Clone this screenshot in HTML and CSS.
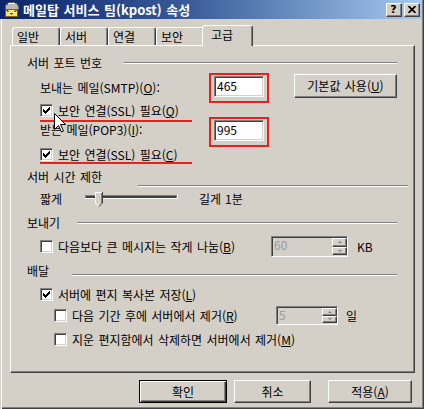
FILE: index.html
```html
<!DOCTYPE html>
<html lang="ko">
<head>
<meta charset="utf-8">
<title>메일탑 서비스 팀(kpost) 속성</title>
<link rel="stylesheet" href="styles.css">
</head>
<body>
<div class="window">
  <div class="titlebar">
    <svg class="appicon" width="18" height="17" viewBox="0 0 18 17" shape-rendering="crispEdges">
      <path d="M3 7 L4 4 L7 2 L11 1 L15 3 L17 6 L16 9 L4 9 Z" fill="#b8b8b8" stroke="#606060" stroke-width="1"/>
      <path d="M6 3 L10 2 L13 3" fill="none" stroke="#ffffff" stroke-width="1"/>
      <rect x="3.5" y="8.5" width="12" height="7" fill="#ffe060" stroke="#806010"/>
      <path d="M4 9 L9.5 13 L15 9" fill="none" stroke="#806010" stroke-width="1"/>
      <path d="M5 11 H8 M11 11 H14" stroke="#ffffff" stroke-width="1"/>
    </svg>
    <span class="title">메일탑 서비스 팀(kpost) 속성</span>
    <span class="tb-btn help">?</span>
    <span class="tb-btn close">
      <svg width="8" height="7" viewBox="0 0 8 7"><path d="M0.5 0 L7.5 7 M7.5 0 L0.5 7" stroke="#000" stroke-width="1.7"/></svg>
    </span>
  </div>

  <div class="content">
    <div class="tabs">
      <div class="tab">일반</div>
      <div class="tab">서버</div>
      <div class="tab">연결</div>
      <div class="tab">보안</div>
      <div class="tab active">고급</div>
    </div>

    <div class="panel">
      <div class="grp grp-ports"><span class="grp-label">서버 포트 번호</span><span class="rule rule-ports"></span></div>

      <div class="port-row smtp-row">
        <span class="port-label">보내는 메일(SMTP)(<u>O</u>):</span>
        <span class="annot-box"><span class="edit">465</span></span>
        <span class="btn defaults-btn">기본값 사용(<u>U</u>)</span>
      </div>

      <div class="chk-row ssl1-row">
        <span class="chk-label annot-ul ul-first">
          <span class="chk"><svg class="tick" width="7" height="7" viewBox="0 0 7 7" shape-rendering="crispEdges"><path d="M0 2h1v3h-1z M1 3h1v3h-1z M2 4h1v3h-1z M3 3h1v3h-1z M4 2h1v3h-1z M5 1h1v3h-1z M6 0h1v3h-1z" fill="#000"/></svg></span>
          <span class="chk-text">보안 연결(SSL) 필요(<u>Q</u>)</span>
        </span>
      </div>

      <div class="port-row pop-row">
        <span class="port-label pop-label">받는 메일(POP3)(<u>I</u>):</span>
        <span class="annot-box"><span class="edit">995</span></span>
      </div>

      <div class="chk-row ssl2-row">
        <span class="chk-label annot-ul ul-second">
          <span class="chk"><svg class="tick" width="7" height="7" viewBox="0 0 7 7" shape-rendering="crispEdges"><path d="M0 2h1v3h-1z M1 3h1v3h-1z M2 4h1v3h-1z M3 3h1v3h-1z M4 2h1v3h-1z M5 1h1v3h-1z M6 0h1v3h-1z" fill="#000"/></svg></span>
          <span class="chk-text">보안 연결(SSL) 필요(<u>C</u>)</span>
        </span>
      </div>

      <div class="grp grp-time"><span class="grp-label">서버 시간 제한</span><span class="rule rule-time"></span></div>

      <div class="slider-row">
        <span class="short-lbl">짧게</span>
        <svg class="slider" width="93" height="15" viewBox="0 0 93 15" shape-rendering="crispEdges">
          <rect x="0" y="3" width="93" height="4" fill="#ffffff"/>
          <rect x="0" y="3" width="92" height="3" fill="#808080"/>
          <rect x="1" y="4" width="90" height="2" fill="#404040"/>
          <polygon points="10,0 17,0 17,11 14,14 13,14 10,11" fill="#D4D0C8"/>
          <rect x="10" y="0" width="7" height="1" fill="#ffffff"/>
          <rect x="10" y="0" width="1" height="11" fill="#ffffff"/>
          <rect x="17" y="0" width="1" height="11" fill="#404040"/>
          <rect x="16" y="1" width="1" height="10" fill="#808080"/>
          <path d="M10.5 11 L13.5 14" stroke="#ffffff" stroke-width="1" shape-rendering="auto"/>
          <path d="M17.5 11 L14 14.5" stroke="#404040" stroke-width="1" shape-rendering="auto"/>
        </svg>
        <span class="long-lbl">길게</span>
        <span class="time-val">1분</span>
      </div>

      <div class="grp grp-send"><span class="grp-label">보내기</span><span class="rule rule-send"></span></div>

      <div class="spin-row split-row">
        <span class="chk-label split-label">
          <span class="chk"></span>
          <span class="chk-text">다음보다 큰 메시지는 작게 나눔(<u>B</u>)</span>
        </span>
        <span class="spin spin-size">
          <span class="spin-val">60</span>
          <span class="spin-btns"><span class="sb sb-up"></span><span class="sb sb-down"></span></span>
        </span>
        <span class="unit unit-kb">KB</span>
      </div>

      <div class="grp grp-deliver"><span class="grp-label">배달</span><span class="rule rule-deliver"></span></div>

      <div class="chk-row keep-row">
        <span class="chk-label">
          <span class="chk"><svg class="tick" width="7" height="7" viewBox="0 0 7 7" shape-rendering="crispEdges"><path d="M0 2h1v3h-1z M1 3h1v3h-1z M2 4h1v3h-1z M3 3h1v3h-1z M4 2h1v3h-1z M5 1h1v3h-1z M6 0h1v3h-1z" fill="#000"/></svg></span>
          <span class="chk-text">서버에 편지 복사본 저장(<u>L</u>)</span>
        </span>
      </div>

      <div class="spin-row remove-row">
        <span class="chk-label remove-label">
          <span class="chk"></span>
          <span class="chk-text">다음 기간 후에 서버에서 제거(<u>R</u>)</span>
        </span>
        <span class="spin spin-days">
          <span class="spin-val">5</span>
          <span class="spin-btns"><span class="sb sb-up"></span><span class="sb sb-down"></span></span>
        </span>
        <span class="unit unit-day">일</span>
      </div>

      <div class="chk-row deleted-row">
        <span class="chk-label">
          <span class="chk"></span>
          <span class="chk-text">지운 편지함에서 삭제하면 서버에서 제거(<u>M</u>)</span>
        </span>
      </div>
    </div>

    <div class="buttons">
      <span class="btn default ok-btn">확인</span>
      <span class="btn cancel-btn">취소</span>
      <span class="btn apply-btn">적용(<u>A</u>)</span>
    </div>
  </div>

  <svg class="cursor" width="13" height="20" viewBox="0 0 13 20">
    <path d="M0.5 0.5 L0.5 16.5 L4.5 12.5 L7.5 19 L9.5 18 L6.5 11.5 L11.5 11.5 Z" fill="#ffffff" stroke="#000000" stroke-width="1"/>
  </svg>
</div>
</body>
</html>
```

FILE: styles.css
```css
* { box-sizing: border-box; }
html, body { margin: 0; padding: 0; }
body {
  width: 424px;
  height: 409px;
  overflow: hidden;
  background: #D4D0C8;
  font-family: "Noto Sans CJK KR", "Noto Sans", sans-serif;
  font-size: 12px;
  color: #000;
  word-spacing: 1px;
}
u { text-decoration: underline; text-underline-offset: 1px; }

.window {
  position: relative;
  width: 424px;
  height: 409px;
  background: #D4D0C8;
  box-shadow: inset 1px 0 #D4D0C8, inset 2px 0 #ffffff, inset -1px -1px #404040, inset -2px -2px #808080;
}

/* title bar */
.titlebar {
  height: 19px;
  margin-right: 2px;
  background: linear-gradient(90deg, #0A246A 0%, #3a5c9a 45%, #A6CAF0 100%);
  display: flex;
  align-items: center;
  padding-left: 2px;
}
.appicon { flex: none; }
.title {
  flex: 1;
  margin-left: 3px;
  color: #fff;
  font-weight: bold;
  font-size: 13px;
  line-height: 19px;
  white-space: nowrap;
}
.tb-btn {
  flex: none;
  width: 16px;
  height: 14px;
  margin-left: 2px;
  background: #D4D0C8;
  border: 1px solid;
  border-color: #fff #404040 #404040 #fff;
  box-shadow: inset -1px -1px #808080;
  display: flex;
  align-items: center;
  justify-content: center;
}
.tb-btn.help {
  font-family: "DejaVu Sans", sans-serif;
  font-weight: bold;
  font-size: 11px;
  line-height: 12px;
  padding-right: 1px;
}
.tb-btn.close { margin-right: 2px; padding-right: 1px; }

/* tabs */
.content { padding-left: 10px; }
.tabs {
  height: 26px;
  display: flex;
  align-items: flex-end;
  margin-left: 2px;
}
.tab {
  flex: none;
  width: 48px;
  height: 18px;
  border: 1px solid;
  border-bottom: none;
  border-color: #fff #404040 transparent #fff;
  box-shadow: inset -1px 0 #808080;
  border-radius: 3px 3px 0 0;
  padding-left: 4px;
  line-height: 18px;
  white-space: nowrap;
}
.tab.active {
  position: relative;
  z-index: 1;
  width: 51px;
  height: 21px;
  margin: 0 -2px -1px -2px;
  padding-left: 8px;
  line-height: 18px;
  background: #D4D0C8;
}

/* panel */
.panel {
  width: 405px;
  height: 328px;
  border: 1px solid;
  border-color: #fff #404040 #404040 #fff;
  box-shadow: inset -1px -1px #808080;
  padding: 10px 0 0 16px;
  display: flex;
  flex-direction: column;
}

.grp {
  flex: none;
  height: 14px;
  display: flex;
  align-items: flex-start;
  line-height: 14px;
  white-space: nowrap;
}
.rule {
  flex: none;
  margin-left: auto;
  height: 2px;
  border-top: 1px solid #808080;
  border-bottom: 1px solid #fff;
}
.rule-ports { width: 273px; margin-top: 6px; margin-right: 17px; }
.grp-time { margin-top: 9px; }
.rule-time { width: 270px; margin-top: 15px; margin-right: 6px; }
.grp-send { margin-top: 10px; }
.rule-send { width: 320px; margin-top: 6px; margin-right: 17px; }
.grp-deliver { margin-top: 7px; }
.rule-deliver { width: 325px; margin-top: 10px; margin-right: 17px; }

/* ports */
.port-row {
  flex: none;
  height: 30px;
  display: flex;
  align-items: center;
  padding-left: 13px;
  white-space: nowrap;
}
.smtp-row { margin-top: 3px; }
.port-label { flex: none; width: 169px; line-height: 14px; }
.pop-label { padding-bottom: 4px; }
.annot-box {
  flex: none;
  display: flex;
  border: 2px solid #E5231B;
  padding: 1px 3px 4px 3px;
}
.edit {
  width: 50px;
  height: 21px;
  background: #fff;
  border: 1px solid;
  border-color: #808080 #fff #fff #808080;
  box-shadow: inset 1px 1px #404040, inset -1px -1px #D4D0C8;
  padding-left: 2px;
  line-height: 18px;
}

.btn {
  display: flex;
  align-items: center;
  justify-content: center;
  background: #D4D0C8;
  border: 1px solid;
  border-color: #fff #404040 #404040 #fff;
  box-shadow: inset -1px -1px #808080;
  white-space: nowrap;
  line-height: 14px;
}
.btn.default {
  border-color: #000;
  box-shadow: inset 1px 1px #fff, inset -1px -1px #404040, inset -2px -2px #808080;
}
.defaults-btn {
  flex: none;
  align-self: flex-start;
  width: 103px;
  height: 24px;
  margin-top: 1px;
  margin-left: 25px;
}

/* checkboxes */
.chk-row {
  flex: none;
  height: 14px;
  display: flex;
  align-items: flex-start;
  padding-left: 13px;
  white-space: nowrap;
}
.chk-label {
  flex: none;
  display: flex;
  align-items: flex-start;
}
.chk {
  flex: none;
  width: 13px;
  height: 13px;
  margin-top: 1px;
  background: #fff;
  border: 1px solid;
  border-color: #808080 #fff #fff #808080;
  box-shadow: inset 1px 1px #404040, inset -1px -1px #D4D0C8;
  display: flex;
  align-items: center;
  justify-content: center;
}
.chk-text {
  margin-left: 5px;
  line-height: 15px;
}
.annot-ul {
  width: 152px;
  border-bottom: 2px solid #E5231B;
}
.ul-first { padding-bottom: 2px; }
.ul-second { padding-bottom: 0; }

.keep-row { margin-top: 9px; }
.deleted-row { margin-top: 7px; padding-left: 27px; }

/* slider */
.slider-row {
  flex: none;
  height: 14px;
  margin-top: 8px;
  display: flex;
  align-items: center;
  padding-left: 13px;
  white-space: nowrap;
  line-height: 14px;
}
.short-lbl { flex: none; width: 45px; }
.slider { flex: none; align-self: flex-start; }
.long-lbl { flex: none; width: 26px; margin-left: 21px; }

/* spin rows */
.spin-row {
  flex: none;
  display: flex;
  align-items: center;
  white-space: nowrap;
}
.split-row { height: 21px; margin-top: 6px; padding-left: 13px; }
.split-label { width: 231px; }
.remove-row { height: 19px; margin-top: 5px; padding-left: 27px; }
.remove-label { width: 222px; }
.split-row .chk, .remove-row .chk { margin-top: 0; }
.split-row .chk-label, .remove-row .chk-label { align-items: center; }

.spin {
  flex: none;
  display: flex;
  height: 100%;
  background: #D4D0C8;
  border: 1px solid;
  border-color: #808080 #fff #fff #808080;
  box-shadow: inset 1px 1px #404040, inset -1px -1px #D4D0C8;
  padding: 1px 0 1px 1px;
}
.spin-size { width: 77px; }
.spin-days { width: 62px; }
.spin-val {
  flex: 1;
  color: #9a9a9a;
  padding-left: 1px;
  line-height: 13px;
}
.spin-btns {
  flex: none;
  width: 15px;
  display: flex;
  flex-direction: column;
}
.sb {
  flex: 1;
  background: #D4D0C8;
  border: 1px solid;
  border-color: #fff #404040 #404040 #fff;
  box-shadow: inset -1px -1px #808080;
  display: flex;
  align-items: center;
  justify-content: center;
}
.sb::before {
  content: "";
  width: 0;
  height: 0;
  border-left: 2px solid transparent;
  border-right: 2px solid transparent;
}
.sb-up::before { border-bottom: 2px solid #808080; }
.sb-down::before { border-top: 2px solid #808080; }

.unit { flex: none; line-height: 14px; }
.unit-kb { margin-left: 9px; }
.unit-day { margin-left: 8px; }

/* dialog buttons */
.buttons {
  display: flex;
  margin-top: 7px;
  padding-left: 129px;
}
.buttons .btn { height: 23px; }
.ok-btn { width: 88px; }
.cancel-btn { width: 77px; margin-left: 7px; }
.apply-btn { width: 84px; margin-left: 17px; }

/* mouse pointer lying over the dialog */
.cursor {
  position: absolute;
  left: 54px;
  top: 113px;
}
```
